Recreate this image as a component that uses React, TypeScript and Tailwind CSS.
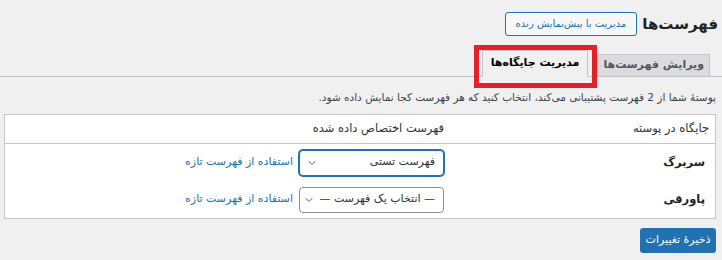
import React from "react";

const font = "font-['DejaVu_Sans',sans-serif]";

function Chevron() {
  return (
    <svg width="12" height="12" viewBox="0 0 20 20" fill="none" className="shrink-0">
      <path d="M5 7.5l5 5 5-5" stroke="#50575e" strokeWidth="1.6" strokeLinecap="round" strokeLinejoin="round" />
    </svg>
  );
}

function FakeSelect({ value, focused }: { value: string; focused?: boolean }) {
  return (
    <div
      className={`flex h-[26px] w-[145px] items-center justify-between gap-1 rounded-[4px] border bg-white pr-[8px] pl-[6px] text-[11px] text-[#2c3338] ${
        focused ? "border-[#2271b1] shadow-[0_0_0_1px_#2271b1]" : "border-[#8c8f94]"
      }`}
    >
      <span className="whitespace-nowrap">{value}</span>
      <Chevron />
    </div>
  );
}

const rows = [
  { label: "سربرگ", value: "فهرست تستی", focused: true },
  { label: "پاورقی", value: "— انتخاب یک فهرست —", focused: false },
];

export default function App() {
  return (
    <div dir="rtl" className={`min-h-screen bg-[#f0f0f1] text-[13px] text-[#3c434a] ${font}`}>
      {/* Title */}
      <div className="flex items-center gap-[5px] pt-3 pr-[4px] pl-1">
        <h1 className="text-[15px] font-bold leading-6 text-[#1d2327]">فهرست‌ها</h1>
        <button
          type="button"
          className="h-6 rounded-[3px] border border-[#2271b1] bg-[#f6f7f7] px-[10px] text-[10px] leading-[22px] text-[#2271b1]"
        >
          مدیریت با پیش‌نمایش زنده
        </button>
      </div>

      {/* Tabs */}
      <div className="mt-[14px] flex items-end gap-[9px] border-b border-[#c3c4c7] pr-3">
        <div className="-mb-px flex h-[23px] items-center border border-[#c3c4c7] bg-[#dcdcde] px-[5px] text-[11px] font-bold text-[#50575e]">
          ویرایش فهرست‌ها
        </div>
        <div className="relative -mb-px">
          <div className="flex h-[27px] items-center border border-[#c3c4c7] border-b-[#f0f0f1] bg-[#f0f0f1] px-[8px] text-[11px] font-bold text-black">
            مدیریت جایگاه‌ها
          </div>
          <div className="pointer-events-none absolute -top-[5px] -right-[9px] -bottom-[11px] -left-[8px] border-[5px] border-[#e3202b]" />
        </div>
      </div>

      {/* Description */}
      <p className="mt-[10px] pr-[6px] text-[10.5px] leading-5">
        پوستهٔ شما از 2 فهرست پشتیبانی می‌کند، انتخاب کنید که هر فهرست کجا نمایش داده شود.
      </p>

      {/* Locations table */}
      <div className="mt-[7px] mr-[6px] ml-[4px] border border-[#c3c4c7] bg-white">
        <div className="flex h-[29px] items-center border-b border-[#c3c4c7] text-[11.5px] text-[#2c3338]">
          <div className="w-[264px] pr-[6px]">جایگاه در پوسته</div>
          <div className="pr-[7px]">فهرست اختصاص داده شده</div>
        </div>
        {rows.map((row) => (
          <div key={row.label} className="flex h-[37px] items-center">
            <div className="w-[264px] pr-[10px] text-[11.5px] font-bold text-[#1d2327]">{row.label}</div>
            <div className="flex items-center gap-[6px] pr-[7px]">
              <FakeSelect value={row.value} focused={row.focused} />
              <a href="#" className="text-[11px] text-[#2271b1]">
                استفاده از فهرست تازه
              </a>
            </div>
          </div>
        ))}
      </div>

      {/* Save */}
      <div className="mt-[9px] pr-[6px]">
        <button
          type="button"
          className="h-[25px] w-[76px] rounded-[3px] bg-[#2271b1] text-[11px] text-white"
        >
          ذخیرهٔ تغییرات
        </button>
      </div>
    </div>
  );
}
